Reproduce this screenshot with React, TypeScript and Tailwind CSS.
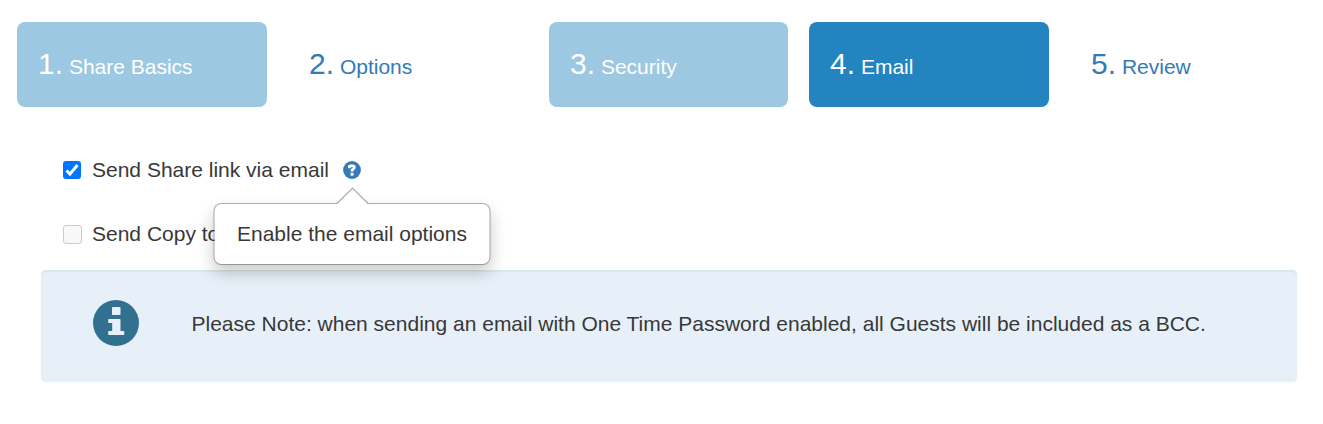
import { useState } from "react";

const steps = [
  { n: 1, label: "Share Basics", state: "done", box: "w-[250px]" },
  { n: 2, label: "Options", state: "link", box: "w-[240px]" },
  { n: 3, label: "Security", state: "done", box: "w-[239px]" },
  { n: 4, label: "Email", state: "active", box: "w-[240px]" },
  { n: 5, label: "Review", state: "link", box: "w-[240px]" },
];

const stepColors: Record<string, string> = {
  done: "bg-[#9dc8e1] text-white",
  active: "bg-[#2384bf] text-white",
  link: "text-[#337ab7]",
};

function QuestionIcon() {
  return (
    <svg viewBox="0 0 18 18" className="block size-[18px]">
      <circle cx="9" cy="9" r="8.9" fill="#337ab7" />
      <path
        d="M6.3 7.3V6Q6.300 4.800 7.500 4.800H9.900Q11.300 4.800 11.300 6.200Q11.300 7.300 10.300 8L9.100 9V10.600"
        fill="none"
        stroke="#fff"
        strokeWidth="2.7"
      />
      <rect x="7.600" y="11.800" width="2.900" height="2.900" fill="#fff" />
    </svg>
  );
}

function InfoIcon() {
  return (
    <svg viewBox="0 0 46 46" className="block size-[46px]">
      <circle cx="23" cy="23" r="23" fill="#31708f" />
      <rect x="19" y="7" width="8.500" height="8" rx="0.800" fill="#e7f0f8" />
      <path
        d="M16 19h10.700q.8 0 .8.800V31h3q.8 0 .8.800v2.400q0 .8-.8.800H16q-.8 0-.8-.8v-2.400q0-.8.8-.8h3.200v-8H16q-.8 0-.8-.8v-2.400q0-.8.8-.8z"
        fill="#e7f0f8"
      />
    </svg>
  );
}

function Checkbox({ checked, disabled, onChange }: any) {
  return (
    <span className="grid size-[20px] place-items-center">
      <input
        type="checkbox"
        checked={checked}
        disabled={disabled}
        onChange={onChange}
        className="col-start-1 row-start-1 size-[19px] appearance-none rounded-[3px] border border-[#767676] bg-white checked:size-[18px] checked:border-0 checked:bg-[#0075ff] disabled:border-[1.5px] disabled:border-[#cbcbcb] disabled:bg-[#f8f8f8]"
      />
      {checked && (
        <svg
          viewBox="0 0 18 18"
          className="pointer-events-none col-start-1 row-start-1 size-[18px]"
        >
          <path
            d="M3.500 9.500 7 13 14.500 4"
            fill="none"
            stroke="#fff"
            strokeWidth="2.900"
          />
        </svg>
      )}
    </span>
  );
}

export default function App() {
  const [sendLink, setSendLink] = useState(true);

  return (
    <div className="h-[424px] bg-white pt-[22px] font-['Liberation_Sans',Arial,sans-serif] text-[21px] text-[#383838]">
      {/* Wizard steps */}
      <nav className="flex gap-[21px] pl-[17px]">
        {steps.map((s) => (
          <a
            key={s.n}
            className={`h-[85px] shrink-0 rounded-[8px] pl-[21px] pt-[21px] leading-[42px] ${s.box} ${stepColors[s.state]}`}
          >
            <span className="text-[30px]">{s.n}.</span> {s.label}
          </a>
        ))}
      </nav>

      <div className="flex h-[163px] flex-col gap-[34px] pl-[62px] pt-[48px]">
        <div className="flex h-[30px] items-center">
          <Checkbox
            checked={sendLink}
            onChange={(e: any) => setSendLink(e.target.checked)}
          />
          <span className="ml-[10px]">Send Share link via email</span>
          <div className="relative ml-[14.5px]">
            <QuestionIcon />
            {/* Popover */}
            <div className="absolute left-1/2 top-[42px] flex h-[62px] w-[277px] -translate-x-1/2 items-center rounded-[8px] border border-black/30 bg-white bg-clip-padding pl-[22px] shadow-[0_8px_16px_rgba(0,0,0,0.2)]">
              <svg
                viewBox="0 0 34 17"
                className="absolute -top-[17px] left-1/2 h-[18px] w-[34px] -translate-x-1/2"
              >
                <path d="M1 16.500 17 .5l16 16V17H1z" fill="#fff" />
                <path d="M1 16.500 17 .5 33 16.500" fill="none" stroke="#adadad" strokeWidth="1.200" />
              </svg>
              <span className="whitespace-nowrap">Enable the email options</span>
            </div>
          </div>
        </div>
        <div className="flex h-[30px] items-center">
          <Checkbox disabled />
          <span className="ml-[10px]">Send Copy to</span>
        </div>
      </div>

      <div className="ml-[41px] flex h-[112px] w-[1256px] items-center rounded-[5px] bg-[#e7f0f8] pl-[51.5px] pb-[6px] shadow-[inset_0_2px_1px_#dae6ed,0_0_1px_#dae6ed]">
        <InfoIcon />
        <p className="ml-[53px] pt-[2px]">
          Please Note: when sending an email with One Time Password enabled, all
          Guests will be included as a BCC.
        </p>
      </div>
    </div>
  );
}
